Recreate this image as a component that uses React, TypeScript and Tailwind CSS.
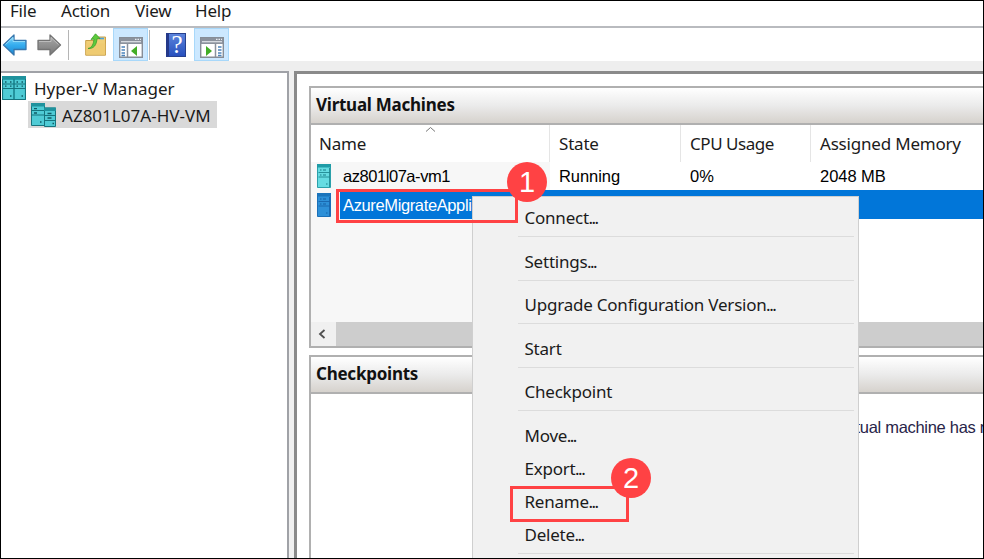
import React from "react";

function BackArrow() {
  return (
    <svg width="26" height="24" viewBox="0 0 26 24">
      <defs>
        <linearGradient id="blueArrow" x1="0" y1="0" x2="0" y2="1">
          <stop offset="0" stopColor="#8fdcfa" />
          <stop offset="0.5" stopColor="#35adef" />
          <stop offset="1" stopColor="#1b86d2" />
        </linearGradient>
      </defs>
      <path d="M1.500 12 12 2v5.500h12v9H12V22z" fill="url(#blueArrow)" stroke="#3676ad" strokeWidth="1.300" strokeLinejoin="round" />
      <path d="M3.500 11.500 11 4.500v4h12" fill="none" stroke="#a5e4fc" strokeWidth=".8" />
    </svg>
  );
}

function ForwardArrow() {
  return (
    <svg width="26" height="24" viewBox="0 0 26 24">
      <defs>
        <linearGradient id="grayArrow" x1="0" y1="0" x2="0" y2="1">
          <stop offset="0" stopColor="#aaa" />
          <stop offset="1" stopColor="#777" />
        </linearGradient>
      </defs>
      <path d="M24.500 12 14 2v5.500H2v9h12V22z" fill="url(#grayArrow)" stroke="#747474" strokeWidth="1.300" strokeLinejoin="round" />
      <path d="M3 8.500h12v-4l7.500 7" fill="none" stroke="#c8c8c8" strokeWidth=".8" />
    </svg>
  );
}

function FolderUp() {
  return (
    <svg width="22" height="23" viewBox="0 0 22 23">
      <path d="M.7 7.500h9l2.300-3.500h8.500v18.200H.7z" fill="#f0cf77" stroke="#c9a04a" />
      <path d="M14 5.500h5" stroke="#4aa3e0" strokeWidth="1.600" />
      <path d="M1.200 10.500h19v11h-19z" fill="#efcb72" />
      <path d="M3 15.500c4.500-1 5.500-5 6-9.500L6 6.500 10.500.8 15 5.500l-3 .3c-.5 6-3 10.200-9 9.700z" fill="#5ccb3c" stroke="#3c9c2b" strokeWidth=".8" />
    </svg>
  );
}

function PaneIcon({ flip = false }: { flip?: boolean }) {
  return (
    <svg width="24" height="21" viewBox="0 0 24 21">
      <path d="M.7.7h22.600v19.600H.7z" fill="#fff" stroke="#868d97" strokeWidth="1.400" />
      <path d="M1 1h22v6H1z" fill="#8b929d" />
      <path d="M2 4.700h20" stroke="#dfe3e8" strokeWidth="1.200" />
      <path d="M16 2.400h1.500m1 0H20m1 0h1" stroke="#e8edf2" strokeWidth="1.200" />
      {flip ? (
        <>
          <path d="M15.500 7v13" stroke="#8b929d" strokeWidth="1.500" />
          <path d="M18 10h3.500m-3.500 3h3.500m-3.500 3h3.500m-3.500 2.500h3.500" stroke="#4b83ba" strokeWidth="1.300" />
          <path d="m6 9 6 5-6 5z" fill="#42ad26" />
        </>
      ) : (
        <>
          <path d="M8.500 7v13" stroke="#8b929d" strokeWidth="1.500" />
          <path d="M2.500 10H6m-3.500 3H6m-3.500 3H6m-3.500 2.500H6" stroke="#4b83ba" strokeWidth="1.300" />
          <path d="m18 9-6 5 6 5z" fill="#42ad26" />
        </>
      )}
    </svg>
  );
}

function HelpBook() {
  return (
    <div className="flex h-[24px] w-[20px] items-center justify-center border border-[#27418f] border-l-[3px] border-l-[#24398a] bg-linear-to-b from-[#5b83dc] to-[#2850bd] font-['Liberation_Serif',serif] text-[25px] leading-none text-white">
      ?
    </div>
  );
}

function ServerPair() {
  return (
    <svg width="24" height="24" viewBox="0 0 24 24">
      <path d="M0 0h24v24H0z" fill="#2ba9b5" />
      <path d="M0 0h24v3.500H0z" fill="#1f929d" />
      <path d="M1.200 4h10v19h-10zM12.800 4h10v19h-10z" fill="#4fcbd5" />
      <path d="M12 3v21M.5 3v20.500h23V3M1 8h22M1 12.500h22" fill="none" stroke="#16747e" />
      <path d="M3 6h1.500m3.500 0h1.500M14.500 6H16m3.500 0H21M3 10.200h1.500m3.500 0h1.500m5 0H16m3.500 0H21M8 20h1.500m10 0H21" stroke="#115c66" strokeWidth="1.300" />
    </svg>
  );
}

function ServerCluster() {
  return (
    <svg width="25" height="24" viewBox="0 0 25 24">
      <path d="M.5.5h13v22H.5z" fill="#4fcbd5" stroke="#16747e" />
      <path d="M0 0h14v3.500H0z" fill="#1f929d" />
      <path d="M1 7.500h12M1 12h12" stroke="#16747e" />
      <path d="M3 5.700h3M3 10h3M9 19h1.500" stroke="#115c66" strokeWidth="1.300" />
      <path d="M13.500 5h11v18.500h-11z" fill="#4fcbd5" stroke="#16747e" />
      <path d="M13 4.500h12v3.500H13z" fill="#1f929d" />
      <path d="M14 12.500h10M14 17.500h10" stroke="#16747e" />
      <path d="M16.500 10.500h4M16.500 15h4m1 5.500H23" stroke="#115c66" strokeWidth="1.300" />
    </svg>
  );
}

function Server({ selected = false }: { selected?: boolean }) {
  const dark = selected ? "#1560a6" : "#167e88";
  return (
    <svg width="14" height="24" viewBox="0 0 14 24">
      <path d="M.5.5h13v23H.5z" fill={selected ? "#2d90d8" : "#66dce2"} stroke={selected ? "#1b70b8" : "#2ba0aa"} />
      <path d="M0 0h14v3.500H0z" fill={selected ? "#1b74bb" : "#1f9ca7"} />
      <path d="M1.500 8.500h11M1.500 13h11M12.500 4v19" stroke={dark} strokeWidth=".8" />
      <path d="M3 6h1.500m1.500 0h3M3 11h1.500m1.500 0h3M9 20h1.500" stroke={dark} strokeWidth="1.200" />
    </svg>
  );
}

function PanelTitle({ children }: { children: React.ReactNode }) {
  return (
    <div className="flex h-[37px] shrink-0 items-center border-b-2 border-[#b0b0b0] bg-linear-to-b from-white via-[#ebebeb] to-[#d6d2cd] pb-px pl-[5px] text-[17px] font-bold tracking-[-0.25px] text-[#111]">
      {children}
    </div>
  );
}

function Badge({ children }: { children: React.ReactNode }) {
  return (
    <div className="flex size-[40px] items-center justify-center rounded-full bg-[#ff4244] font-['Liberation_Sans',sans-serif] text-[29px] leading-none text-white">
      {children}
    </div>
  );
}

const menuItems = [
  { label: "Connect", dots: true, line: true },
  { label: "Settings", dots: true, line: true },
  { label: "Upgrade Configuration Version", dots: true, line: true },
  { label: "Start", line: true },
  { label: "Checkpoint", line: true },
  { label: "Move", dots: true },
  { label: "Export", dots: true },
  { label: "Rename", dots: true },
  { label: "Delete", dots: true, line: true },
];

function ContextMenu() {
  return (
    <div className="absolute top-[195px] left-[471px] h-[362px] w-[387px] overflow-hidden border border-b-0 border-[#cfcfcf] bg-[#f1f1f1] pt-[5px] pr-[4px] pl-[45px]">
      {menuItems.map((item) => (
        <div key={item.label}>
          <div className="flex h-[33px] items-center pb-px pl-[6.5px] text-[17px] tracking-[-0.22px] whitespace-nowrap">
            {item.label}
            {item.dots && <span className="-ml-[0.5px] tracking-[-1.5px]">...</span>}
          </div>
          {item.line && (
            <div className="h-[10.5px] pt-px">
              <div className="h-px bg-[#dcdcdc]" />
            </div>
          )}
        </div>
      ))}
    </div>
  );
}

export default function App() {
  return (
    <div className="relative flex h-[559px] w-[984px] flex-col overflow-hidden border border-black bg-white font-['Noto_Sans',sans-serif] text-[17px] leading-[24px] text-[#1b1b1b]">
      <nav className="flex h-[25px] shrink-0 items-center gap-[24px] pb-[5px] pl-[9px] text-[17px] tracking-[-0.2px]">
        <span className="w-[27px]">File</span>
        <span className="w-[50px]">Action</span>
        <span className="w-[36px]">View</span>
        <span>Help</span>
      </nav>
      <div className="flex h-[35px] shrink-0 items-center border-t-2 border-[#b9bbbf] pl-px">
        <BackArrow />
        <div className="w-[8px]" />
        <ForwardArrow />
        <div className="ml-[6px] h-[30px] w-px bg-[#b5b5b5]" />
        <div className="ml-[16px]"><FolderUp /></div>
        <div className="ml-[6px] flex h-[33px] w-[35px] items-center justify-center border border-[#a8d8fa] bg-[#cce8ff] pt-[5px]"><PaneIcon /></div>
        <div className="ml-[1px] h-[30px] w-px bg-[#b5b5b5]" />
        <div className="ml-[16px]"><HelpBook /></div>
        <div className="ml-[8px] flex h-[33px] w-[35px] items-center justify-center border border-[#a8d8fa] bg-[#cce8ff] pt-[5px]"><PaneIcon flip /></div>
      </div>
      <div className="h-[10px] shrink-0 bg-[#eee]" />
      <div className="flex min-h-0 flex-1 bg-[#f0f0f0]">
        <aside className="w-[288px] shrink-0 border-t-2 border-r-2 border-[#a0a2a7] bg-white pt-[2px]">
          <div className="flex h-[26px] items-center gap-[8px] pl-px">
            <ServerPair />
            <span className="pt-[2px]">Hyper-V Manager</span>
          </div>
          <div className="ml-[27px] flex h-[27px] w-[189px] items-center gap-[6px] bg-[#d9d9d9] pl-[3px] whitespace-nowrap">
            <ServerCluster />
            <span className="pt-[2px] tracking-[0.02px]">AZ801L07A-HV-VM</span>
          </div>
        </aside>
        <main className="ml-[5px] flex min-w-0 flex-1 flex-col border-t-[3px] border-l-[3px] border-[#8a8a8a] bg-white pt-[12px] pl-[12px]">
          <section className="flex h-[262px] shrink-0 flex-col border-t-2 border-b-2 border-l-2 border-[#b0b0b0]">
            <PanelTitle>Virtual Machines</PanelTitle>
            <div className="flex h-[37px] shrink-0 tracking-[-0.2px]">
              <div className="relative flex w-[239px] items-center border-r border-[#e5e5e5] pt-[1px] pl-[8px]">
                Name
                <svg className="absolute top-px left-[114px]" width="11" height="7" viewBox="0 0 11 7"><path d="m1 5.500 4.500-4 4.500 4" fill="none" stroke="#777" /></svg>
              </div>
              <div className="flex w-[131px] items-center border-r border-[#e5e5e5] pt-[1px] pl-[9px]">State</div>
              <div className="flex w-[130px] items-center border-r border-[#e5e5e5] pt-[1px] pl-[9px] tracking-[-0.45px]">CPU Usage</div>
              <div className="flex flex-1 items-center pt-[1px] pl-[9px] whitespace-nowrap">Assigned Memory</div>
            </div>
            <div className="flex h-[28px] shrink-0 items-center font-['Liberation_Sans',sans-serif] text-[16.5px] tracking-[-0.05px] text-black">
              <div className="flex h-full w-[239px] items-center gap-[12px] bg-[#f7f7f7] pl-[6px]"><Server /><span className="tracking-[-0.45px]">az801l07a-vm1</span></div>
              <div className="w-[131px] pl-[9px]">Running</div>
              <div className="w-[130px] pl-[9px]">0%</div>
              <div className="flex-1 pl-[9px]">2048 MB</div>
            </div>
            <div className="flex h-[29px] shrink-0 items-center bg-[#f7f7f7] pl-[6px] font-['Liberation_Sans',sans-serif] text-[16.5px] text-white">
              <Server selected />
              <div className="ml-[9px] flex h-full flex-1 items-center bg-[#0176d9] pl-[3px] tracking-[-0.37px]">AzureMigrateAppliance</div>
            </div>
            <div className="w-[239px] flex-1 bg-[#f7f7f7]" />
            <div className="flex h-[24px] shrink-0 bg-[#cdcdcd]">
              <div className="flex w-[25px] items-center justify-center bg-[#f0f0f0] pr-[3px]">
                <svg width="8" height="10" viewBox="0 0 8 10"><path d="M6.500 1 2 5l4.500 4" fill="none" stroke="#505050" strokeWidth="1.800" /></svg>
              </div>
            </div>
          </section>
          <section className="mt-[7px] flex flex-1 flex-col border-t-2 border-l-2 border-[#b0b0b0]">
            <PanelTitle>Checkpoints</PanelTitle>
            <div className="overflow-hidden pt-[21px] pl-[528px] font-['Liberation_Sans',sans-serif] text-[16.5px] tracking-[-0.3px] whitespace-nowrap text-[#282448]">virtual machine has no</div>
          </section>
        </main>
      </div>
      <ContextMenu />
      <div className="absolute top-[188px] left-[335px] h-[34px] w-[182px] border-[3px] border-[#ff4244]" />
      <div className="absolute top-[161px] left-[506px]"><Badge>1</Badge></div>
      <div className="absolute top-[485px] left-[509px] h-[36px] w-[119px] border-[3px] border-[#ff4244]" />
      <div className="absolute top-[457px] left-[610px]"><Badge>2</Badge></div>
    </div>
  );
}
